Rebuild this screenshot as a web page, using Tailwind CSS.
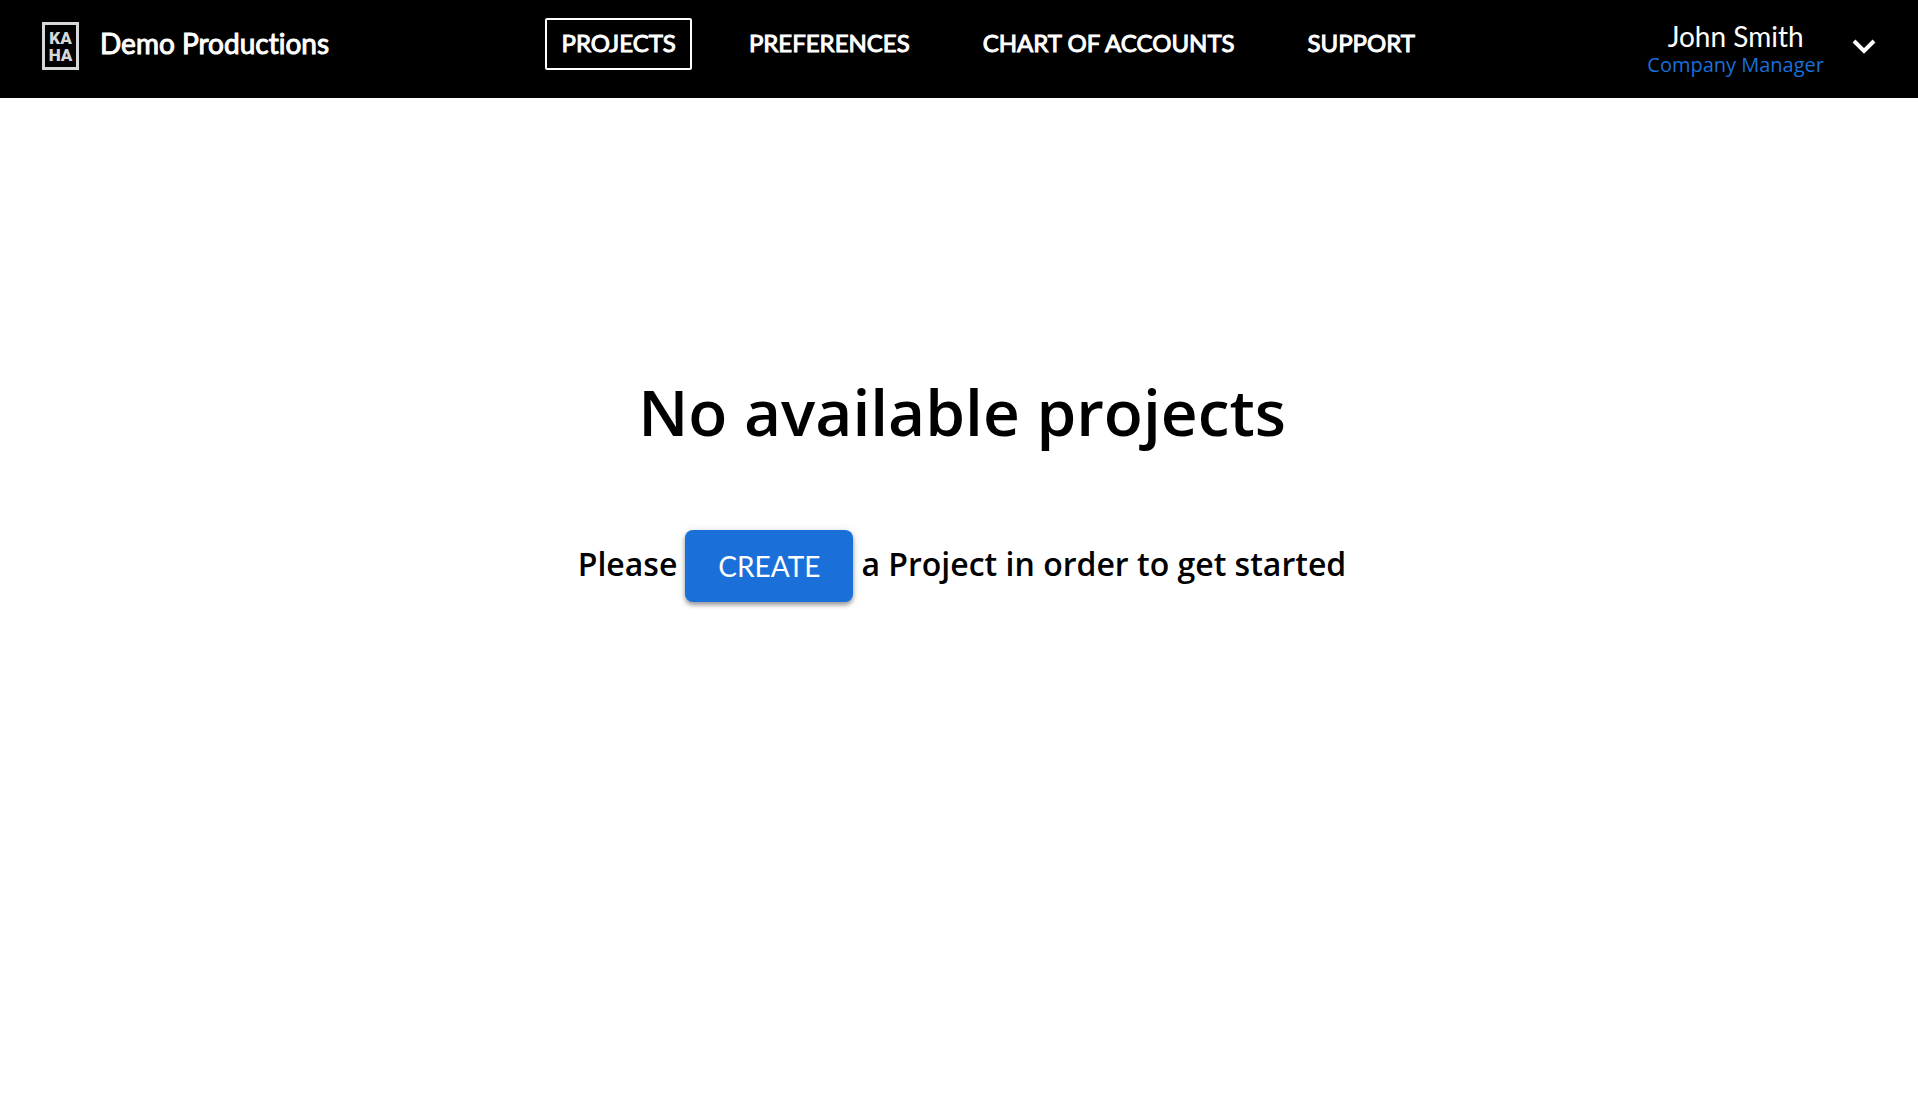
<!DOCTYPE html>
<html lang="en">
<head>
<meta charset="utf-8">
<meta name="viewport" content="width=device-width, initial-scale=1">
<title>Demo Productions</title>
<script src="https://cdn.jsdelivr.net/npm/@tailwindcss/browser@4"></script>
</head>
<body class="min-h-screen bg-white font-['Open_Sans',sans-serif] text-black">
<header class="flex justify-between bg-black pr-[42px] pl-10 text-white">
  <a href="#" class="flex h-[98px] items-start gap-5 pt-[22px] font-['Lato',sans-serif] text-[28px] leading-[42px] [font-variant-ligatures:none] [-webkit-text-stroke:1px_white]">
    <svg class="h-12 w-10 [-webkit-text-stroke:0]" viewBox="0 0 40 48" role="img" aria-label="Kaha">
      <rect x="3.5" y="1.5" width="34" height="45" fill="none" stroke="#d5d8d8" stroke-width="3"/>
      <g fill="#d5d8d8" font-family="Roboto, sans-serif" font-weight="900" font-size="17" text-anchor="middle">
        <text x="20.5" y="22">KA</text>
        <text x="20.5" y="39">HA</text>
      </g>
    </svg>
    <span>Demo Productions</span>
  </a>
  <nav class="flex items-start gap-[41px] pt-[18px] font-['Lato',sans-serif] text-2xl leading-[46px] [-webkit-text-stroke:1px_white]">
    <a href="#" aria-current="page" class="rounded-xs border-2 border-white px-[14px] pb-[2px]">PROJECTS</a>
    <a href="#" class="border-2 border-transparent px-[14px] pb-[2px]">PREFERENCES</a>
    <a href="#" class="border-2 border-transparent px-[14px] pb-[2px]">CHART OF ACCOUNTS</a>
    <a href="#" class="border-2 border-transparent px-[14px] pb-[2px]">SUPPORT</a>
  </nav>
  <button type="button" class="flex h-[98px] items-start gap-7 pt-5">
    <span class="flex flex-col items-center">
      <span class="font-['Lato',sans-serif] text-[28px] leading-8">John Smith</span>
      <span class="text-[20px] leading-[26px] text-[#1a6fd8]">Company Manager</span>
    </span>
    <svg class="mt-[14px] h-6 w-6" viewBox="0 0 24 24" fill="none" stroke="currentColor" stroke-width="4" aria-hidden="true"><path d="M2 7l10 10L22 7"/></svg>
  </button>
</header>
<main class="flex flex-col items-center gap-[70px] pt-[266px] pr-8 pl-[38px]">
  <h1 class="text-center text-[64px] leading-[96px] font-semibold">No available projects</h1>
  <p class="flex flex-wrap items-center justify-center gap-2 text-[32px] leading-[68px] font-semibold">
    <span class="pb-1">Please</span>
    <button type="button" class="h-[72px] rounded-lg bg-[#1a6fd8] px-[33px] font-['Lato',sans-serif] text-[28px] font-normal text-white shadow-[0_3px_4px_rgb(0_0_0/0.35),0_1px_10px_rgb(0_0_0/0.12)]">CREATE</button>
    <span class="pb-1">a Project in order to get started</span>
  </p>
</main>
</body>
</html>
